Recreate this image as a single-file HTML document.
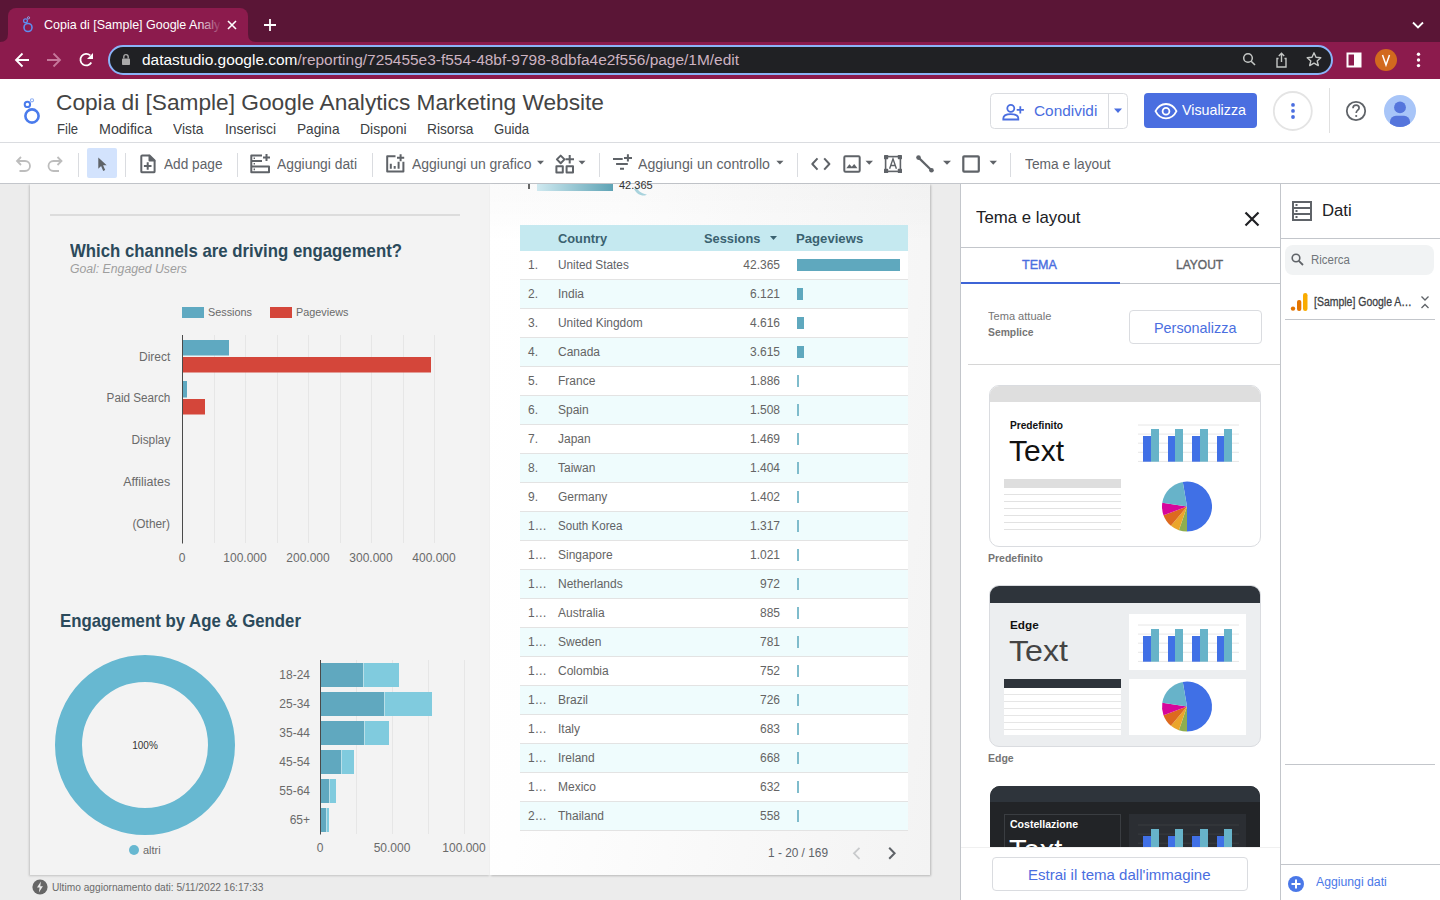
<!DOCTYPE html>
<html><head><meta charset="utf-8">
<style>
*{box-sizing:border-box;margin:0;padding:0}
html,body{width:1440px;height:900px;overflow:hidden;background:#fff;font-family:"Liberation Sans",sans-serif;color:#3c4043}
.a{position:absolute}
svg{display:block;position:absolute}
.nw{white-space:nowrap}
/* chrome */
#strip{left:0;top:0;width:1440px;height:42px;background:#5a1536}
#tab{left:8px;top:8px;width:240px;height:34px;background:#8c1b4d;border-radius:8px 8px 0 0}
#toolbar{left:0;top:42px;width:1440px;height:37px;background:#8c1b4d}
#tabtxt{left:44px;top:17px;font-size:13.5px;color:#fff;width:190px;overflow:hidden;transform:scaleX(0.925);transform-origin:0 0}
#url{left:108px;top:45px;width:1225px;height:30px;background:#202124;border:2px solid #8ab4f8;border-radius:15px}
#urltxt{left:142px;top:51px;font-size:15.5px;color:#fff}
#urltxt span{color:#cdb3c1}
/* app header */
#title{left:56px;top:89px;font-size:22.7px;color:#444}
.menu{top:121px;font-size:14.5px;color:#3c4043}
#hdrline{left:0;top:142px;width:1440px;height:1px;background:#dadce0}
#tb2line{left:0;top:183px;width:1440px;height:1px;background:#c3c6cb}
.tbt{top:156px;font-size:14px;color:#5f6368}
.vdiv{width:1px;background:#dadce0}
/* canvas */
#canvas{left:0;top:184px;width:961px;height:716px;background:#ececec}
#pgL{left:30px;top:184px;width:460px;height:691px;background:#f3f3f3;box-shadow:-1px 1px 2px rgba(0,0,0,.18)}
#pgR{left:490px;top:184px;width:440px;height:691px;background:linear-gradient(100deg,#fff 0%,#fefefe 25%,#f3f3f3 100%);box-shadow:1px 1px 2px rgba(0,0,0,.22)}
</style></head><body>
<!-- CHROME -->
<div class="a" id="strip"></div>
<div class="a" id="tab"></div>
<div class="a nw" id="tabtxt">Copia di [Sample] Google Analy</div>
<div class="a" id="toolbar"></div>
<div class="a" id="url"></div>
<div class="a nw" id="urltxt" style="--tw:597;transform:scaleX(0.9968);transform-origin:left top">datastudio.google.com<span>/reporting/725455e3-f554-48bf-9798-8dbfa4e2f556/page/1M/edit</span></div>
<!--CHROME_ICONS-->
<svg style="left:0;top:0" width="1440" height="80">
 <!-- tab outward curves -->
 <path d="M0 42 Q8 42 8 34 V42Z" fill="#8c1b4d"/>
 <path d="M248 34 Q248 42 256 42 H248Z" fill="#8c1b4d"/>
 <!-- logo in tab -->
 <g fill="none" stroke="#5e8ef0">
  <circle cx="28" cy="27.5" r="4" stroke-width="1.6"/>
  <circle cx="25.5" cy="20.8" r="1.9" stroke-width="1.3"/>
  <circle cx="28.5" cy="17.8" r="1.1" stroke-width="0.9" stroke="#8fb0f3"/>
 </g>
 <!-- close x -->
 <path d="M228 21L236 29M236 21L228 29" stroke="#fff" stroke-width="1.6"/>
 <!-- plus -->
 <path d="M270 19V31M264 25H276" stroke="#fff" stroke-width="1.8"/>
 <!-- chevron -->
 <path d="M1413 22.5L1418 27.5L1423 22.5" stroke="#fff" stroke-width="1.8" fill="none"/>
 <!-- back -->
 <path d="M29 60H16.5M22.5 53.5L16 60L22.5 66.5" stroke="#fff" stroke-width="1.8" fill="none"/>
 <!-- forward -->
 <path d="M47 60H59.5M53.5 53.5L60 60L53.5 66.5" stroke="#c6789b" stroke-width="1.8" fill="none"/>
 <!-- reload -->
 <path d="M91.3 62.5A5.8 5.8 0 1 1 90.2 55.4" stroke="#fff" stroke-width="1.8" fill="none"/>
 <path d="M93 53V59H87Z" fill="#fff"/>
 <!-- lock -->
 <rect x="122" y="58.5" width="8" height="6.5" rx="0.8" fill="#aaaaaa"/>
 <path d="M123.8 58.5V56.8A2.2 2.2 0 0 1 128.2 56.8V58.5" stroke="#aaaaaa" stroke-width="1.4" fill="none"/>
 <!-- search -->
 <circle cx="1248" cy="58" r="4.3" stroke="#c4c7c5" stroke-width="1.5" fill="none"/>
 <path d="M1251.2 61.2L1255 65" stroke="#c4c7c5" stroke-width="1.6"/>
 <!-- share -->
 <path d="M1278.5 58.5H1277V67H1286V58.5H1284.5" stroke="#c4c7c5" stroke-width="1.4" fill="none"/>
 <path d="M1281.5 62V53.5M1278.8 56L1281.5 53.3L1284.2 56" stroke="#c4c7c5" stroke-width="1.4" fill="none"/>
 <!-- star -->
 <path d="M1314 52.8L1316 57.3L1320.8 57.7L1317.2 60.9L1318.3 65.6L1314 63.1L1309.7 65.6L1310.8 60.9L1307.2 57.7L1312 57.3Z" stroke="#c4c7c5" stroke-width="1.4" fill="none" stroke-linejoin="round"/>
 <!-- sidebar -->
 <rect x="1347.5" y="53.5" width="13" height="13" fill="none" stroke="#fff" stroke-width="2"/>
 <rect x="1354" y="53" width="7" height="14" fill="#fff"/>
 <!-- avatar -->
 <circle cx="1386" cy="60" r="11" fill="#d2691e"/>
 <path d="M1382.5 55L1386 65L1389.5 55" stroke="#fff" stroke-width="1.5" fill="none"/>
 <!-- kebab -->
 <circle cx="1418.5" cy="54.2" r="1.7" fill="#fff"/><circle cx="1418.5" cy="60" r="1.7" fill="#fff"/><circle cx="1418.5" cy="65.6" r="1.7" fill="#fff"/>
</svg>
<div class="a" style="left:197px;top:12px;width:26px;height:24px;background:linear-gradient(90deg,rgba(140,27,77,0),#8c1b4d)"></div>
<!--/CHROME_ICONS-->

<!-- HEADER -->
<div class="a nw" id="title" style="--tw:548;transform:scaleX(0.9997);transform-origin:left top">Copia di [Sample] Google Analytics Marketing Website</div>
<div class="a menu" style="left:57px;--tw:21.1;transform:scaleX(0.9027);transform-origin:left top">File</div>
<div class="a menu" style="left:99px;--tw:53.1;transform:scaleX(0.9833);transform-origin:left top">Modifica</div>
<div class="a menu" style="left:173px;--tw:30.4;transform:scaleX(0.9505);transform-origin:left top">Vista</div>
<div class="a menu" style="left:225px;--tw:51.1;transform:scaleX(0.9608);transform-origin:left top">Inserisci</div>
<div class="a menu" style="left:297px;--tw:42.5;transform:scaleX(0.9412);transform-origin:left top">Pagina</div>
<div class="a menu" style="left:360px;--tw:46.5;transform:scaleX(0.9616);transform-origin:left top">Disponi</div>
<div class="a menu" style="left:427px;--tw:46.5;transform:scaleX(0.9460);transform-origin:left top">Risorsa</div>
<div class="a menu" style="left:494px;--tw:35;transform:scaleX(0.9043);transform-origin:left top">Guida</div>
<!--HEADER_RIGHT-->
<svg style="left:0;top:80px" width="1440" height="104" viewBox="0 80 1440 104">
 <!-- logo -->
 <g fill="none" stroke="#4a7bec">
  <circle cx="32" cy="116" r="6.6" stroke-width="2.6"/>
  <circle cx="27.4" cy="104.4" r="2.7" stroke-width="2"/>
  <circle cx="32" cy="100.3" r="1.6" stroke-width="1.1" stroke="#8fb0f3"/>
 </g>
 <!-- condividi btn -->
 <rect x="990.5" y="93.5" width="137" height="35" rx="4" fill="#fff" stroke="#dadce0"/>
 <line x1="1108.5" y1="94" x2="1108.5" y2="128" stroke="#dadce0"/>
 <path d="M1114 108.5H1122L1118 113Z" fill="#4a6ee0"/>
 <g fill="none" stroke="#4a6ee0" stroke-width="1.8">
  <circle cx="1010.8" cy="108.3" r="3.5"/>
  <path d="M1003.3 119.5V118.6C1003.3 115.7 1006.8 114.2 1010.8 114.2C1014.8 114.2 1018.3 115.7 1018.3 118.6V119.5Z"/>
  <path d="M1020.3 106.3V113.5M1016.7 109.9H1023.9"/>
 </g>
 <!-- visualizza btn -->
 <rect x="1144" y="93" width="113" height="35" rx="4" fill="#4a6ee0"/>
 <g fill="none" stroke="#fff" stroke-width="1.8">
  <path d="M1155.5 111.2C1158 106.2 1161.5 104 1166 104C1170.5 104 1174 106.2 1176.5 111.2C1174 116.2 1170.5 118.4 1166 118.4C1161.5 118.4 1158 116.2 1155.5 111.2Z"/>
  <circle cx="1166" cy="111.2" r="3.4"/>
 </g>
 <!-- kebab circle -->
 <circle cx="1292.8" cy="111" r="19" fill="#fff" stroke="#e4e4e4" stroke-width="1.8"/>
 <circle cx="1293" cy="104.9" r="1.9" fill="#4a6ee0"/><circle cx="1293" cy="110.9" r="1.9" fill="#4a6ee0"/><circle cx="1293" cy="117" r="1.9" fill="#4a6ee0"/>
 <line x1="1329.5" y1="88" x2="1329.5" y2="133" stroke="#e0e0e0"/>
 <!-- help -->
 <circle cx="1356" cy="111" r="9.2" fill="none" stroke="#5f6368" stroke-width="1.8"/>
 <path d="M1353 108.3C1353 106.4 1354.4 105.2 1356.1 105.2C1357.8 105.2 1359.1 106.4 1359.1 108C1359.1 110.2 1356.2 110.3 1356.2 113" fill="none" stroke="#5f6368" stroke-width="1.7"/>
 <circle cx="1356.2" cy="116" r="1.1" fill="#5f6368"/>
 <!-- avatar -->
 <circle cx="1400" cy="111" r="16" fill="#a8c5f8"/>
 <clipPath id="avc"><circle cx="1400" cy="111" r="16"/></clipPath>
 <circle cx="1400" cy="107.4" r="5.9" fill="#5575dc"/>
 <rect x="1390" y="115.7" width="20" height="16" rx="6" fill="#5575dc" clip-path="url(#avc)"/>
</svg>
<div class="a nw" style="left:1034px;top:102px;font-size:15.3px;color:#4a6ee0;--tw:63.3;transform:scaleX(1.0060);transform-origin:left top">Condividi</div>
<div class="a nw" style="left:1182px;top:102px;font-size:14.6px;color:#fff;--tw:64;transform:scaleX(0.9780);transform-origin:left top">Visualizza</div>
<!--/HEADER_RIGHT-->
<div class="a" id="hdrline"></div>

<!-- TOOLBAR -->
<div class="a nw tbt" style="left:164px;--tw:58.5;transform:scaleX(0.9758);transform-origin:left top">Add page</div>
<div class="a nw tbt" style="left:277px;--tw:80;transform:scaleX(0.9882);transform-origin:left top">Aggiungi dati</div>
<div class="a nw tbt" style="left:411.5px;--tw:119.5;transform:scaleX(0.9969);transform-origin:left top">Aggiungi un grafico</div>
<div class="a nw tbt" style="left:638px;--tw:131.9;transform:scaleX(1.0087);transform-origin:left top">Aggiungi un controllo</div>
<div class="a nw tbt" style="left:1025px;--tw:85.7;transform:scaleX(0.9831);transform-origin:left top">Tema e layout</div>
<!--TOOLBAR_ICONS-->
<div class="a" style="left:87px;top:148px;width:30px;height:30px;background:#d3e3fd;border-radius:2px"></div>
<svg style="left:0;top:143px" width="1440" height="40" viewBox="0 143 1440 40">
 <g stroke="#dadce0"><line x1="78.5" y1="153" x2="78.5" y2="177"/><line x1="125.5" y1="153" x2="125.5" y2="177"/><line x1="237.5" y1="153" x2="237.5" y2="177"/><line x1="372.5" y1="153" x2="372.5" y2="177"/><line x1="599.5" y1="153" x2="599.5" y2="177"/><line x1="797.5" y1="153" x2="797.5" y2="177"/><line x1="1010.5" y1="153" x2="1010.5" y2="177"/></g>
 <!-- undo redo -->
 <g fill="none" stroke="#bdbdbd" stroke-width="1.8">
  <path d="M17.5 161H25A5 5 0 0 1 25 171H19.5"/><path d="M21 157L17 161L21 165"/>
  <path d="M61 161H53.5A5 5 0 0 0 53.5 171H59"/><path d="M57.5 157L61.5 161L57.5 165"/>
 </g>
 <!-- cursor -->
 <path d="M98.3 157.5V168.8L101.1 166L103.2 170.9L105.2 170L103.1 165.2H106.7Z" fill="#5f6368"/>
 <g fill="none" stroke="#5f6368" stroke-width="2" stroke-linejoin="round">
  <!-- add page -->
  <path d="M149.5 155.4H142.2A0.9 0.9 0 0 0 141.3 156.3V171.4A0.9 0.9 0 0 0 142.2 172.3H153.7A0.9 0.9 0 0 0 154.6 171.4V160.5"/>
  <path d="M147.7 162.2V169.8M143.9 166H151.5"/><path d="M149.5 155.4L154.6 160.5H149.5Z" fill="#5f6368"/>
  <!-- aggiungi dati -->
  <path d="M262 155.4H251.3V172.3H269V166.6H251.3M251.3 161H262"/>
  <path d="M266.5 154V161M263 157.5H270"/><path d="M253.6 158.2h1.4M253.6 163.8h1.4M253.6 169.4h1.4" stroke-width="1.6"/>
  <!-- grafico -->
  <path d="M395.5 156.2H387.2V171.6H403.4V161.8"/><path d="M390.8 163.8V168.8M394.7 166V168.8M398.6 161.8V168.8"/><path d="M400.6 154.2V161.2M397 157.7H404.2"/>
  <!-- community viz -->
  <path d="M560.7 155.6L564.5 159.4L560.7 163.2L556.9 159.4Z"/><rect x="556.4" y="166.3" width="6.4" height="6.2"/><rect x="566.6" y="166.3" width="6.4" height="6.2"/><path d="M569.7 155V163.5M565.5 159.3H574"/>
  <!-- control -->
  <path d="M613 158.9H622.7M616.1 163.9H627.8M620 168.8H624"/><path d="M627.9 154.2V161.5M624 158H632"/>
  <!-- code -->
  <path d="M817.5 158.4L812.3 164L817.5 169.6M824.2 158.4L829.4 164L824.2 169.6"/>
  <!-- image -->
  <rect x="844.3" y="156.2" width="15.4" height="15.5" rx="1.2"/>
  <!-- rect -->
  <rect x="963.3" y="156.3" width="15.5" height="15.3" rx="0.8" stroke-width="2.2"/>
 </g>
 <path d="M846.3 168.2L849.4 164.3L851.8 166.8L854.2 164L857.5 168.2Z" fill="#5f6368"/>
 <!-- text box -->
 <g fill="#5f6368"><rect x="884" y="155" width="4.2" height="4.2" rx="0.6"/><rect x="897.8" y="155" width="4.2" height="4.2" rx="0.6"/><rect x="884" y="168.8" width="4.2" height="4.2" rx="0.6"/><rect x="897.8" y="168.8" width="4.2" height="4.2" rx="0.6"/></g>
 <rect x="885.6" y="156.6" width="14.8" height="14.8" fill="none" stroke="#5f6368" stroke-width="1.6"/>
 <path d="M889.6 168.8L893 158.8L896.4 168.8M890.7 165.5H895.3" fill="none" stroke="#5f6368" stroke-width="1.4"/>
 <!-- line -->
 <path d="M918.3 157.4L931.7 170.5" stroke="#5f6368" stroke-width="2.2"/>
 <circle cx="918.5" cy="157.6" r="2.3" fill="#5f6368"/><circle cx="931.5" cy="170.3" r="2.3" fill="#5f6368"/>
 <!-- dropdown arrows -->
 <g fill="#5f6368">
  <path d="M537 160.8H544L540.5 164.6Z"/><path d="M578.5 160.8H585.5L582 164.6Z"/><path d="M776.3 160.8H783.5L779.9 164.6Z"/>
  <path d="M865.5 160.8H873L869.25 164.8Z"/><path d="M943 160.8H951L947 164.8Z"/><path d="M989.5 160.8H997L993.25 164.8Z"/>
 </g>
</svg>
<!--/TOOLBAR_ICONS-->
<div class="a" id="tb2line"></div>

<!-- CANVAS -->
<div class="a" id="canvas"></div>
<div class="a" id="pgL"></div>
<div class="a" id="pgR"></div>
<!--CANVAS_LEFT-->
<div class="a" style="left:50px;top:214px;width:410px;height:2px;background:#dcdcdc"></div>
<div class="a nw" style="left:70px;top:239.5px;font-size:19px;font-weight:bold;color:#2b4a5b;--tw:332;transform:scaleX(0.8833);transform-origin:left top">Which channels are driving engagement?</div>
<div class="a nw" style="left:70px;top:262px;font-size:12px;font-style:italic;color:#9e9e9e;--tw:116.9;transform:scaleX(1.0189);transform-origin:left top">Goal: Engaged Users</div>
<div class="a" style="left:182px;top:307px;width:22px;height:11px;background:#5fa9c1"></div>
<div class="a nw" style="left:208px;top:306px;font-size:11px;color:#6a6a6a;--tw:44;transform:scaleX(0.9856);transform-origin:left top">Sessions</div>
<div class="a" style="left:270px;top:307px;width:22px;height:11px;background:#d4463a"></div>
<div class="a nw" style="left:296px;top:306px;font-size:11px;color:#6a6a6a;--tw:52.4;transform:scaleX(0.9849);transform-origin:left top">Pageviews</div>
<svg style="left:0;top:0" width="490" height="600">
 <g stroke="#e6e6e6" stroke-width="1">
  <line x1="214.5" y1="335" x2="214.5" y2="543"/><line x1="245.5" y1="335" x2="245.5" y2="543"/>
  <line x1="277.5" y1="335" x2="277.5" y2="543"/><line x1="308.5" y1="335" x2="308.5" y2="543"/>
  <line x1="340.5" y1="335" x2="340.5" y2="543"/><line x1="371.5" y1="335" x2="371.5" y2="543"/>
  <line x1="403.5" y1="335" x2="403.5" y2="543"/><line x1="434.5" y1="335" x2="434.5" y2="543"/>
 </g>
 <rect x="182" y="340" width="47" height="15.5" fill="#5fa9c1"/>
 <rect x="182" y="357" width="249" height="15.5" fill="#d4463a"/>
 <rect x="182" y="381" width="5" height="16.5" fill="#5fa9c1"/>
 <rect x="182" y="399" width="23" height="15.5" fill="#d4463a"/>
 <line x1="182.5" y1="335" x2="182.5" y2="543.5" stroke="#4a4a4a" stroke-width="1"/>
</svg>
<div class="a nw" style="right:1270px;top:350px;font-size:12px;color:#6a6a6a;text-align:right;--tw:31.3;transform:scaleX(0.9986);transform-origin:right top">Direct</div>
<div class="a nw" style="right:1270px;top:391px;font-size:12px;color:#6a6a6a;--tw:63.8;transform:scaleX(0.9759);transform-origin:right top">Paid Search</div>
<div class="a nw" style="right:1270px;top:433px;font-size:12px;color:#6a6a6a;--tw:38.9;transform:scaleX(0.9883);transform-origin:right top">Display</div>
<div class="a nw" style="right:1270px;top:475px;font-size:12px;color:#6a6a6a;--tw:46.9;transform:scaleX(1.0390);transform-origin:right top">Affiliates</div>
<div class="a nw" style="right:1270px;top:517px;font-size:12px;color:#6a6a6a;--tw:37.6;transform:scaleX(0.9891);transform-origin:right top">(Other)</div>
<div class="a nw" style="left:172px;width:20px;text-align:center;top:551px;font-size:12px;color:#6a6a6a">0</div>
<div class="a nw" style="left:215px;width:60px;text-align:center;top:551px;font-size:12px;color:#6a6a6a">100.000</div>
<div class="a nw" style="left:278px;width:60px;text-align:center;top:551px;font-size:12px;color:#6a6a6a">200.000</div>
<div class="a nw" style="left:341px;width:60px;text-align:center;top:551px;font-size:12px;color:#6a6a6a">300.000</div>
<div class="a nw" style="left:404px;width:60px;text-align:center;top:551px;font-size:12px;color:#6a6a6a">400.000</div>

<div class="a nw" style="left:60px;top:609.5px;font-size:19px;font-weight:bold;color:#2b4a5b;--tw:241;transform:scaleX(0.8836);transform-origin:left top">Engagement by Age &amp; Gender</div>
<svg style="left:0;top:0" width="490" height="900">
 <circle cx="145" cy="745" r="76.5" fill="none" stroke="#67b8d1" stroke-width="27"/>
 <circle cx="134" cy="850" r="5" fill="#67b8d1"/>
 <g stroke="#e6e6e6" stroke-width="1">
  <line x1="356.5" y1="660" x2="356.5" y2="834"/><line x1="392.5" y1="660" x2="392.5" y2="834"/>
  <line x1="428.5" y1="660" x2="428.5" y2="834"/><line x1="464.5" y1="660" x2="464.5" y2="834"/>
 </g>
 <g fill="#60a8bf">
  <rect x="320.5" y="663" width="42.5" height="24"/>
  <rect x="320.5" y="692" width="63.5" height="24"/>
  <rect x="320.5" y="721" width="43.5" height="24"/>
  <rect x="320.5" y="750" width="20.5" height="24"/>
  <rect x="320.5" y="779" width="8.5" height="24"/>
  <rect x="320.5" y="808" width="5.5" height="24"/>
 </g>
 <g fill="#80cbde">
  <rect x="363.5" y="663" width="35.5" height="24"/>
  <rect x="384.5" y="692" width="47.5" height="24"/>
  <rect x="364.5" y="721" width="24.5" height="24"/>
  <rect x="341.5" y="750" width="12.5" height="24"/>
  <rect x="329.5" y="779" width="6.5" height="24"/>
  <rect x="326.5" y="808" width="2.5" height="24"/>
 </g>
 <line x1="320.5" y1="660" x2="320.5" y2="834.5" stroke="#4a4a4a" stroke-width="1"/>
</svg>
<div class="a nw" style="left:105px;width:80px;text-align:center;top:740px;font-size:10px;color:#333">100%</div>
<div class="a nw" style="left:143px;top:844px;font-size:11px;color:#6a6a6a">altri</div>
<div class="a nw" style="right:1130px;top:668px;font-size:12px;color:#6a6a6a">18-24</div>
<div class="a nw" style="right:1130px;top:697px;font-size:12px;color:#6a6a6a">25-34</div>
<div class="a nw" style="right:1130px;top:726px;font-size:12px;color:#6a6a6a">35-44</div>
<div class="a nw" style="right:1130px;top:755px;font-size:12px;color:#6a6a6a">45-54</div>
<div class="a nw" style="right:1130px;top:784px;font-size:12px;color:#6a6a6a">55-64</div>
<div class="a nw" style="right:1130px;top:813px;font-size:12px;color:#6a6a6a">65+</div>
<div class="a nw" style="left:310px;width:20px;text-align:center;top:841px;font-size:12px;color:#6a6a6a">0</div>
<div class="a nw" style="left:362px;width:60px;text-align:center;top:841px;font-size:12px;color:#6a6a6a">50.000</div>
<div class="a nw" style="left:434px;width:60px;text-align:center;top:841px;font-size:12px;color:#6a6a6a">100.000</div>

<svg style="left:32px;top:879px" width="16" height="16" viewBox="0 0 16 16"><circle cx="8" cy="8" r="7.6" fill="#666"/><path d="M8.9 2.6L5 8.6H7.6L6.9 13.4L10.9 7.2H8.3Z" fill="#ececec"/></svg>
<div class="a nw" style="left:52px;top:881px;font-size:10.5px;color:#6a6a6a;--tw:211.4;transform:scaleX(0.9692);transform-origin:left top">Ultimo aggiornamento dati: 5/11/2022 16:17:33</div>
<!--/CANVAS_LEFT-->
<!--CANVAS_TABLE-->
<div class="a" style="left:490px;top:184px;width:440px;height:60px;background:linear-gradient(180deg,rgba(0,0,0,0.02),rgba(0,0,0,0))"></div>
<div class="a" style="left:537px;top:184px;width:76px;height:7px;background:linear-gradient(90deg,#cfe9f0,#5ea3b5)"></div>
<div class="a" style="left:528px;top:184px;width:2px;height:5px;background:#666"></div><svg style="left:633px;top:188px" width="16" height="10" viewBox="0 0 16 10"><path d="M1 1C3 5 7 8 12 7.5L14 6.5C10 6 6 4 4 0Z" fill="#a9d3dd"/></svg>
<div class="a nw" style="left:619px;top:179px;font-size:11px;color:#333">42.365</div>
<div class="a" style="left:520px;top:225px;width:388px;height:26px;background:#c5e9f0"></div>
<div class="a nw" style="left:558px;top:231px;font-size:13.5px;font-weight:bold;color:#3a6270;--tw:49.2;transform:scaleX(0.9507);transform-origin:left top">Country</div>
<div class="a nw" style="left:704px;top:231px;font-size:13.5px;font-weight:bold;color:#3a6270;--tw:56.4;transform:scaleX(0.9514);transform-origin:left top">Sessions</div>
<svg style="left:769.5px;top:236px" width="7" height="4"><path d="M0 0H7L3.5 4Z" fill="#3a6270"/></svg>
<div class="a nw" style="left:796px;top:231px;font-size:13.5px;font-weight:bold;color:#3a6270;--tw:67.2;transform:scaleX(0.9733);transform-origin:left top">Pageviews</div>
<div class="a" style="left:520px;top:251px;width:388px;height:29px;background:#ffffff;border-bottom:1px solid #e3e3e3"></div>
<div class="a nw" style="left:528px;top:258px;font-size:12px;color:#646464">1.</div>
<div class="a nw" style="left:558px;top:258px;font-size:12px;color:#5f6368;--tw:70.8;transform:scaleX(0.9827);transform-origin:left top">United States</div>
<div class="a nw" style="right:660px;top:258px;font-size:12px;color:#646464">42.365</div>
<div class="a" style="left:797px;top:259px;width:103px;height:12px;background:#5fa8be"></div>
<div class="a" style="left:520px;top:280px;width:388px;height:29px;background:#effcfd;border-bottom:1px solid #e3e3e3"></div>
<div class="a nw" style="left:528px;top:287px;font-size:12px;color:#646464">2.</div>
<div class="a nw" style="left:558px;top:287px;font-size:12px;color:#646464">India</div>
<div class="a nw" style="right:660px;top:287px;font-size:12px;color:#646464">6.121</div>
<div class="a" style="left:797px;top:288px;width:6px;height:12px;background:#5fa8be"></div>
<div class="a" style="left:520px;top:309px;width:388px;height:29px;background:#ffffff;border-bottom:1px solid #e3e3e3"></div>
<div class="a nw" style="left:528px;top:316px;font-size:12px;color:#646464">3.</div>
<div class="a nw" style="left:558px;top:316px;font-size:12px;color:#5f6368;--tw:84.8;transform:scaleX(0.9931);transform-origin:left top">United Kingdom</div>
<div class="a nw" style="right:660px;top:316px;font-size:12px;color:#646464">4.616</div>
<div class="a" style="left:797px;top:317px;width:7px;height:12px;background:#5fa8be"></div>
<div class="a" style="left:520px;top:338px;width:388px;height:29px;background:#effcfd;border-bottom:1px solid #e3e3e3"></div>
<div class="a nw" style="left:528px;top:345px;font-size:12px;color:#646464">4.</div>
<div class="a nw" style="left:558px;top:345px;font-size:12px;color:#646464">Canada</div>
<div class="a nw" style="right:660px;top:345px;font-size:12px;color:#646464">3.615</div>
<div class="a" style="left:797px;top:346px;width:7px;height:12px;background:#5fa8be"></div>
<div class="a" style="left:520px;top:367px;width:388px;height:29px;background:#ffffff;border-bottom:1px solid #e3e3e3"></div>
<div class="a nw" style="left:528px;top:374px;font-size:12px;color:#646464">5.</div>
<div class="a nw" style="left:558px;top:374px;font-size:12px;color:#646464">France</div>
<div class="a nw" style="right:660px;top:374px;font-size:12px;color:#646464">1.886</div>
<div class="a" style="left:797px;top:375px;width:1.5px;height:12px;background:#7fbccc"></div>
<div class="a" style="left:520px;top:396px;width:388px;height:29px;background:#effcfd;border-bottom:1px solid #e3e3e3"></div>
<div class="a nw" style="left:528px;top:403px;font-size:12px;color:#646464">6.</div>
<div class="a nw" style="left:558px;top:403px;font-size:12px;color:#646464">Spain</div>
<div class="a nw" style="right:660px;top:403px;font-size:12px;color:#646464">1.508</div>
<div class="a" style="left:797px;top:404px;width:1.5px;height:12px;background:#7fbccc"></div>
<div class="a" style="left:520px;top:425px;width:388px;height:29px;background:#ffffff;border-bottom:1px solid #e3e3e3"></div>
<div class="a nw" style="left:528px;top:432px;font-size:12px;color:#646464">7.</div>
<div class="a nw" style="left:558px;top:432px;font-size:12px;color:#646464">Japan</div>
<div class="a nw" style="right:660px;top:432px;font-size:12px;color:#646464">1.469</div>
<div class="a" style="left:797px;top:433px;width:1.5px;height:12px;background:#7fbccc"></div>
<div class="a" style="left:520px;top:454px;width:388px;height:29px;background:#effcfd;border-bottom:1px solid #e3e3e3"></div>
<div class="a nw" style="left:528px;top:461px;font-size:12px;color:#646464">8.</div>
<div class="a nw" style="left:558px;top:461px;font-size:12px;color:#646464">Taiwan</div>
<div class="a nw" style="right:660px;top:461px;font-size:12px;color:#646464">1.404</div>
<div class="a" style="left:797px;top:462px;width:2px;height:12px;background:#7fbccc"></div>
<div class="a" style="left:520px;top:483px;width:388px;height:29px;background:#ffffff;border-bottom:1px solid #e3e3e3"></div>
<div class="a nw" style="left:528px;top:490px;font-size:12px;color:#646464">9.</div>
<div class="a nw" style="left:558px;top:490px;font-size:12px;color:#646464">Germany</div>
<div class="a nw" style="right:660px;top:490px;font-size:12px;color:#646464">1.402</div>
<div class="a" style="left:797px;top:491px;width:1.5px;height:12px;background:#7fbccc"></div>
<div class="a" style="left:520px;top:512px;width:388px;height:29px;background:#effcfd;border-bottom:1px solid #e3e3e3"></div>
<div class="a nw" style="left:528px;top:519px;font-size:12px;color:#646464">1&hellip;</div>
<div class="a nw" style="left:558px;top:519px;font-size:12px;color:#5f6368;--tw:64.4;transform:scaleX(0.9652);transform-origin:left top">South Korea</div>
<div class="a nw" style="right:660px;top:519px;font-size:12px;color:#646464">1.317</div>
<div class="a" style="left:797px;top:520px;width:1.5px;height:12px;background:#7fbccc"></div>
<div class="a" style="left:520px;top:541px;width:388px;height:29px;background:#ffffff;border-bottom:1px solid #e3e3e3"></div>
<div class="a nw" style="left:528px;top:548px;font-size:12px;color:#646464">1&hellip;</div>
<div class="a nw" style="left:558px;top:548px;font-size:12px;color:#646464">Singapore</div>
<div class="a nw" style="right:660px;top:548px;font-size:12px;color:#646464">1.021</div>
<div class="a" style="left:797px;top:549px;width:1.5px;height:12px;background:#7fbccc"></div>
<div class="a" style="left:520px;top:570px;width:388px;height:29px;background:#effcfd;border-bottom:1px solid #e3e3e3"></div>
<div class="a nw" style="left:528px;top:577px;font-size:12px;color:#646464">1&hellip;</div>
<div class="a nw" style="left:558px;top:577px;font-size:12px;color:#646464">Netherlands</div>
<div class="a nw" style="right:660px;top:577px;font-size:12px;color:#646464">972</div>
<div class="a" style="left:797px;top:578px;width:1.5px;height:12px;background:#7fbccc"></div>
<div class="a" style="left:520px;top:599px;width:388px;height:29px;background:#ffffff;border-bottom:1px solid #e3e3e3"></div>
<div class="a nw" style="left:528px;top:606px;font-size:12px;color:#646464">1&hellip;</div>
<div class="a nw" style="left:558px;top:606px;font-size:12px;color:#646464">Australia</div>
<div class="a nw" style="right:660px;top:606px;font-size:12px;color:#646464">885</div>
<div class="a" style="left:797px;top:607px;width:1.5px;height:12px;background:#7fbccc"></div>
<div class="a" style="left:520px;top:628px;width:388px;height:29px;background:#effcfd;border-bottom:1px solid #e3e3e3"></div>
<div class="a nw" style="left:528px;top:635px;font-size:12px;color:#646464">1&hellip;</div>
<div class="a nw" style="left:558px;top:635px;font-size:12px;color:#646464">Sweden</div>
<div class="a nw" style="right:660px;top:635px;font-size:12px;color:#646464">781</div>
<div class="a" style="left:797px;top:636px;width:1.5px;height:12px;background:#7fbccc"></div>
<div class="a" style="left:520px;top:657px;width:388px;height:29px;background:#ffffff;border-bottom:1px solid #e3e3e3"></div>
<div class="a nw" style="left:528px;top:664px;font-size:12px;color:#646464">1&hellip;</div>
<div class="a nw" style="left:558px;top:664px;font-size:12px;color:#646464">Colombia</div>
<div class="a nw" style="right:660px;top:664px;font-size:12px;color:#646464">752</div>
<div class="a" style="left:797px;top:665px;width:1.5px;height:12px;background:#7fbccc"></div>
<div class="a" style="left:520px;top:686px;width:388px;height:29px;background:#effcfd;border-bottom:1px solid #e3e3e3"></div>
<div class="a nw" style="left:528px;top:693px;font-size:12px;color:#646464">1&hellip;</div>
<div class="a nw" style="left:558px;top:693px;font-size:12px;color:#646464">Brazil</div>
<div class="a nw" style="right:660px;top:693px;font-size:12px;color:#646464">726</div>
<div class="a" style="left:797px;top:694px;width:1.5px;height:12px;background:#7fbccc"></div>
<div class="a" style="left:520px;top:715px;width:388px;height:29px;background:#ffffff;border-bottom:1px solid #e3e3e3"></div>
<div class="a nw" style="left:528px;top:722px;font-size:12px;color:#646464">1&hellip;</div>
<div class="a nw" style="left:558px;top:722px;font-size:12px;color:#646464">Italy</div>
<div class="a nw" style="right:660px;top:722px;font-size:12px;color:#646464">683</div>
<div class="a" style="left:797px;top:723px;width:1.5px;height:12px;background:#7fbccc"></div>
<div class="a" style="left:520px;top:744px;width:388px;height:29px;background:#effcfd;border-bottom:1px solid #e3e3e3"></div>
<div class="a nw" style="left:528px;top:751px;font-size:12px;color:#646464">1&hellip;</div>
<div class="a nw" style="left:558px;top:751px;font-size:12px;color:#646464">Ireland</div>
<div class="a nw" style="right:660px;top:751px;font-size:12px;color:#646464">668</div>
<div class="a" style="left:797px;top:752px;width:1.5px;height:12px;background:#7fbccc"></div>
<div class="a" style="left:520px;top:773px;width:388px;height:29px;background:#ffffff;border-bottom:1px solid #e3e3e3"></div>
<div class="a nw" style="left:528px;top:780px;font-size:12px;color:#646464">1&hellip;</div>
<div class="a nw" style="left:558px;top:780px;font-size:12px;color:#646464">Mexico</div>
<div class="a nw" style="right:660px;top:780px;font-size:12px;color:#646464">632</div>
<div class="a" style="left:797px;top:781px;width:1.5px;height:12px;background:#7fbccc"></div>
<div class="a" style="left:520px;top:802px;width:388px;height:29px;background:#effcfd;border-bottom:1px solid #e3e3e3"></div>
<div class="a nw" style="left:528px;top:809px;font-size:12px;color:#646464">2&hellip;</div>
<div class="a nw" style="left:558px;top:809px;font-size:12px;color:#646464">Thailand</div>
<div class="a nw" style="right:660px;top:809px;font-size:12px;color:#646464">558</div>
<div class="a" style="left:797px;top:810px;width:1.5px;height:12px;background:#7fbccc"></div>
<div class="a nw" style="left:768px;top:846px;font-size:12px;color:#5f6368;--tw:60;transform:scaleX(0.9882);transform-origin:left top">1 - 20 / 169</div>
<svg style="left:850px;top:846px" width="12" height="14" viewBox="0 0 12 14"><path d="M9.5 1.8L4 7.3L9.5 12.8" stroke="#c8cacc" stroke-width="1.8" fill="none"/></svg>
<svg style="left:886px;top:846px" width="12" height="14" viewBox="0 0 12 14"><path d="M3.2 1.8L8.6 7.3L3.2 12.8" stroke="#5f6368" stroke-width="2" fill="none"/></svg>
<!--/CANVAS_TABLE-->
<!--PANEL_THEME-->
<div class="a" style="left:960px;top:184px;width:321px;height:716px;background:#fff;border-left:1px solid #c3c6cb;border-right:1px solid #c3c6cb"></div>
<div class="a nw" style="left:976px;top:208px;font-size:17px;color:#202124;--tw:104.5;transform:scaleX(0.9873);transform-origin:left top">Tema e layout</div>
<svg style="left:1244px;top:211px" width="16" height="16" viewBox="0 0 16 16"><path d="M1.5 1.5L14.5 14.5M14.5 1.5L1.5 14.5" stroke="#202124" stroke-width="2.2"/></svg>
<div class="a" style="left:961px;top:247px;width:319px;height:1px;background:#c3c6cb"></div>
<div class="a nw" style="left:1022px;top:257px;font-size:13.5px;color:#4a6ee0;-webkit-text-stroke:0.4px #4a6ee0;--tw:34.8;transform:scaleX(0.9276);transform-origin:left top">TEMA</div>
<div class="a nw" style="left:1176px;top:257px;font-size:13.5px;color:#5f6368;-webkit-text-stroke:0.4px #5f6368;--tw:47.2;transform:scaleX(0.8903);transform-origin:left top">LAYOUT</div>
<div class="a" style="left:961px;top:283px;width:319px;height:1px;background:#c3c6cb"></div>
<div class="a" style="left:961px;top:282px;width:159px;height:2px;background:#3e64d6"></div>
<div class="a nw" style="left:988px;top:310px;font-size:11px;color:#757575;--tw:63.3;transform:scaleX(1.0050);transform-origin:left top">Tema attuale</div>
<div class="a nw" style="left:988px;top:326px;font-size:11px;font-weight:bold;color:#757575;--tw:45.4;transform:scaleX(0.9397);transform-origin:left top">Semplice</div>
<div class="a" style="left:1129px;top:310px;width:133px;height:34px;border:1px solid #dadce0;border-radius:4px"></div>
<div class="a nw" style="left:1154px;top:319px;font-size:15px;color:#4a6ee0;--tw:82.4;transform:scaleX(0.9594);transform-origin:left top">Personalizza</div>
<div class="a" style="left:968px;top:364px;width:312px;height:1px;background:#d6d6d6"></div>
<div class="a" style="left:989px;top:385px;width:272px;height:162px;border:1px solid #dadce0;border-radius:10px;background:#fff;overflow:hidden"><div style="height:16px;background:#dedede"></div></div>
<div class="a nw" style="left:1010px;top:419px;font-size:10.5px;font-weight:bold;color:#111;--tw:53;transform:scaleX(0.9664);transform-origin:left top">Predefinito</div>
<div class="a nw" style="left:1009px;top:435px;font-size:29px;color:#111;--tw:55;transform:scaleX(1.0341);transform-origin:left top">Text</div>
<div class="a" style="left:1004px;top:479px;width:117px;height:9px;background:#dedede"></div>
<div class="a" style="left:1004px;top:494px;width:117px;height:1px;background:#e2e2e2"></div>
<div class="a" style="left:1004px;top:501px;width:117px;height:1px;background:#e2e2e2"></div>
<div class="a" style="left:1004px;top:508px;width:117px;height:1px;background:#e2e2e2"></div>
<div class="a" style="left:1004px;top:515px;width:117px;height:1px;background:#e2e2e2"></div>
<div class="a" style="left:1004px;top:522px;width:117px;height:1px;background:#e2e2e2"></div>
<div class="a" style="left:1004px;top:529px;width:117px;height:1px;background:#e2e2e2"></div>
<svg style="left:0;top:0" width="1440" height="900"><line x1="1138" y1="425.0" x2="1239" y2="425.0" stroke="#e6e6e6" stroke-width="1"/><line x1="1138" y1="434.1" x2="1239" y2="434.1" stroke="#e6e6e6" stroke-width="1"/><line x1="1138" y1="443.2" x2="1239" y2="443.2" stroke="#e6e6e6" stroke-width="1"/><line x1="1138" y1="452.3" x2="1239" y2="452.3" stroke="#e6e6e6" stroke-width="1"/><line x1="1138" y1="461.4" x2="1239" y2="461.4" stroke="#e6e6e6" stroke-width="1"/><rect x="1143" y="436" width="8" height="25.7" fill="#4070e6"/><rect x="1151" y="429" width="8" height="32.7" fill="#67b3c9"/><rect x="1168" y="436" width="7" height="25.7" fill="#4070e6"/><rect x="1175" y="429" width="8" height="32.7" fill="#67b3c9"/><rect x="1192" y="436" width="8" height="25.7" fill="#4070e6"/><rect x="1200" y="429" width="8" height="32.7" fill="#67b3c9"/><rect x="1217" y="436" width="7" height="25.7" fill="#4070e6"/><rect x="1224" y="429" width="8" height="32.7" fill="#67b3c9"/><path d="M1187 506.6L1182.79 481.96A25 25 0 1 1 1187.00 531.60Z" fill="#4070e6"/><path d="M1187 506.6L1187.00 531.60A25 25 0 0 1 1178.86 530.24Z" fill="#8fae4e"/><path d="M1187 506.6L1178.86 530.24A25 25 0 0 1 1170.93 525.75Z" fill="#eaa52b"/><path d="M1187 506.6L1170.93 525.75A25 25 0 0 1 1163.51 515.15Z" fill="#dd6a1f"/><path d="M1187 506.6L1163.51 515.15A25 25 0 0 1 1162.31 502.69Z" fill="#d6069b"/><path d="M1187 506.6L1162.31 502.69A25 25 0 0 1 1182.79 481.96Z" fill="#67b3c9"/></svg>
<div class="a nw" style="left:988px;top:552px;font-size:10.5px;font-weight:bold;color:#757575">Predefinito</div>
<div class="a" style="left:989px;top:585px;width:272px;height:162px;border:1px solid #dadce0;border-radius:10px;background:#eceef0;overflow:hidden"><div style="height:17px;background:#2e343b"></div></div>
<div class="a" style="left:1129px;top:614px;width:117px;height:56px;background:#fff"></div>
<div class="a" style="left:1129px;top:679px;width:117px;height:56px;background:#fff"></div>
<div class="a" style="left:1004px;top:679px;width:117px;height:56px;background:#fff"></div>
<div class="a" style="left:1004px;top:679px;width:117px;height:9px;background:#2e343b"></div>
<div class="a" style="left:1004px;top:694px;width:117px;height:1px;background:#e6e6e6"></div>
<div class="a" style="left:1004px;top:701px;width:117px;height:1px;background:#e6e6e6"></div>
<div class="a" style="left:1004px;top:708px;width:117px;height:1px;background:#e6e6e6"></div>
<div class="a" style="left:1004px;top:715px;width:117px;height:1px;background:#e6e6e6"></div>
<div class="a" style="left:1004px;top:722px;width:117px;height:1px;background:#e6e6e6"></div>
<div class="a" style="left:1004px;top:729px;width:117px;height:1px;background:#e6e6e6"></div>
<div class="a nw" style="left:1010px;top:619px;font-size:10.5px;font-weight:bold;color:#111;--tw:28.7;transform:scaleX(1.1180);transform-origin:left top">Edge</div>
<div class="a nw" style="left:1009px;top:635px;font-size:29px;color:#444;--tw:59;transform:scaleX(1.1093);transform-origin:left top">Text</div>
<svg style="left:0;top:0" width="1440" height="900"><line x1="1138" y1="625.0" x2="1239" y2="625.0" stroke="#e6e6e6" stroke-width="1"/><line x1="1138" y1="634.1" x2="1239" y2="634.1" stroke="#e6e6e6" stroke-width="1"/><line x1="1138" y1="643.2" x2="1239" y2="643.2" stroke="#e6e6e6" stroke-width="1"/><line x1="1138" y1="652.3" x2="1239" y2="652.3" stroke="#e6e6e6" stroke-width="1"/><line x1="1138" y1="661.4" x2="1239" y2="661.4" stroke="#e6e6e6" stroke-width="1"/><rect x="1143" y="636" width="8" height="25.7" fill="#4070e6"/><rect x="1151" y="629" width="8" height="32.7" fill="#67b3c9"/><rect x="1168" y="636" width="7" height="25.7" fill="#4070e6"/><rect x="1175" y="629" width="8" height="32.7" fill="#67b3c9"/><rect x="1192" y="636" width="8" height="25.7" fill="#4070e6"/><rect x="1200" y="629" width="8" height="32.7" fill="#67b3c9"/><rect x="1217" y="636" width="7" height="25.7" fill="#4070e6"/><rect x="1224" y="629" width="8" height="32.7" fill="#67b3c9"/><path d="M1187 706.6L1182.79 681.96A25 25 0 1 1 1187.00 731.60Z" fill="#4070e6"/><path d="M1187 706.6L1187.00 731.60A25 25 0 0 1 1178.86 730.24Z" fill="#8fae4e"/><path d="M1187 706.6L1178.86 730.24A25 25 0 0 1 1170.93 725.75Z" fill="#eaa52b"/><path d="M1187 706.6L1170.93 725.75A25 25 0 0 1 1163.51 715.15Z" fill="#dd6a1f"/><path d="M1187 706.6L1163.51 715.15A25 25 0 0 1 1162.31 702.69Z" fill="#d6069b"/><path d="M1187 706.6L1162.31 702.69A25 25 0 0 1 1182.79 681.96Z" fill="#67b3c9"/></svg>
<div class="a nw" style="left:988px;top:752px;font-size:10.5px;font-weight:bold;color:#757575">Edge</div>
<div class="a" style="left:990px;top:786px;width:270px;height:80px;border-radius:10px 10px 0 0;background:#222427;overflow:hidden"><div style="height:16px;background:#2e343b"></div></div>
<div class="a" style="left:1004px;top:814px;width:117px;height:40px;border:1px solid #3a3d41"></div>
<div class="a" style="left:1129px;top:814px;width:117px;height:40px;background:#2b2e33"></div>
<div class="a nw" style="left:1010px;top:818px;font-size:10.5px;font-weight:bold;color:#fff;--tw:68;transform:scaleX(1.0046);transform-origin:left top">Costellazione</div>
<div class="a nw" style="left:1009px;top:834px;font-size:29px;color:#fff">Text</div>
<svg style="left:0;top:0" width="1440" height="900"><line x1="1138" y1="825.0" x2="1239" y2="825.0" stroke="#3a3d41" stroke-width="1"/><line x1="1138" y1="834.1" x2="1239" y2="834.1" stroke="#3a3d41" stroke-width="1"/><line x1="1138" y1="843.2" x2="1239" y2="843.2" stroke="#3a3d41" stroke-width="1"/><rect x="1143" y="836" width="8" height="20" fill="#4070e6"/><rect x="1151" y="829" width="8" height="27" fill="#67b3c9"/><rect x="1168" y="836" width="7" height="20" fill="#4070e6"/><rect x="1175" y="829" width="8" height="27" fill="#67b3c9"/><rect x="1192" y="836" width="8" height="20" fill="#4070e6"/><rect x="1200" y="829" width="8" height="27" fill="#67b3c9"/><rect x="1217" y="836" width="7" height="20" fill="#4070e6"/><rect x="1224" y="829" width="8" height="27" fill="#67b3c9"/></svg>
<div class="a" style="left:961px;top:847px;width:319px;height:53px;background:#fff;border-top:1px solid #f0f0f0"></div>
<div class="a" style="left:992px;top:857px;width:256px;height:34px;border:1px solid #dadce0;border-radius:4px"></div>
<div class="a nw" style="left:1028px;top:866px;font-size:15px;color:#4a6ee0;--tw:182.6;transform:scaleX(1.0027);transform-origin:left top">Estrai il tema dall'immagine</div>
<!--/PANEL_THEME-->
<!--PANEL_DATA-->
<div class="a" style="left:1281px;top:184px;width:159px;height:716px;background:#fff"></div>
<svg style="left:1292px;top:201px" width="20" height="20" viewBox="0 0 20 20"><g fill="none" stroke="#5f6368" stroke-width="2"><rect x="1" y="1" width="18" height="18"/><line x1="1" y1="7" x2="19" y2="7"/><line x1="1" y1="13" x2="19" y2="13"/></g><g fill="#5f6368"><rect x="3.5" y="3" width="2" height="2"/><rect x="3.5" y="9" width="2" height="2"/><rect x="3.5" y="15" width="2" height="2"/></g></svg>
<div class="a nw" style="left:1322px;top:202px;font-size:16px;color:#202124;--tw:29.7;transform:scaleX(1.0438);transform-origin:left top">Dati</div>
<div class="a" style="left:1281px;top:238px;width:159px;height:1px;background:#c3c6cb"></div>
<div class="a" style="left:1285px;top:245px;width:149px;height:30px;background:#f1f3f4;border-radius:8px"></div>
<svg style="left:1291px;top:253px" width="13" height="13" viewBox="0 0 13 13"><circle cx="5" cy="5" r="3.8" fill="none" stroke="#5f6368" stroke-width="1.6"/><path d="M7.8 7.8L12 12" stroke="#5f6368" stroke-width="1.8"/></svg>
<div class="a nw" style="left:1311px;top:253px;font-size:12.5px;color:#70757a;--tw:38.8;transform:scaleX(0.9156);transform-origin:left top">Ricerca</div>
<svg style="left:1290px;top:292px" width="19" height="20" viewBox="0 0 19 20"><circle cx="3" cy="16.6" r="2.2" fill="#e37400"/><rect x="7" y="8" width="4.3" height="11" rx="2" fill="#e37400"/><rect x="13" y="1" width="4.5" height="18" rx="2.2" fill="#f9ab00"/></svg>
<div class="a nw" style="left:1314px;top:294px;font-size:12.8px;color:#3c4043;-webkit-text-stroke:0.3px #3c4043;--tw:97.8;transform:scaleX(0.8183);transform-origin:left top">[Sample] Google A…</div>
<svg style="left:1420px;top:295px" width="10" height="15" viewBox="0 0 10 15"><path d="M1.5 1.5L5 5L8.5 1.5M1.5 13L5 9.5L8.5 13" fill="none" stroke="#5f6368" stroke-width="1.3"/></svg>
<div class="a" style="left:1285px;top:319px;width:150px;height:1px;background:#c3c6cb"></div>
<div class="a" style="left:1285px;top:764px;width:150px;height:1px;background:#c3c6cb"></div>
<div class="a" style="left:1281px;top:864px;width:159px;height:1px;background:#c3c6cb"></div>
<svg style="left:1287px;top:875px" width="18" height="18" viewBox="0 0 18 18"><circle cx="9" cy="9" r="8" fill="#4a78e8"/><path d="M9 4.5V13.5M4.5 9H13.5" stroke="#fff" stroke-width="2"/></svg>
<div class="a nw" style="left:1316px;top:875px;font-size:12px;color:#4a78e8;--tw:70.8;transform:scaleX(1.0203);transform-origin:left top">Aggiungi dati</div>
<!--/PANEL_DATA-->
</body></html>
